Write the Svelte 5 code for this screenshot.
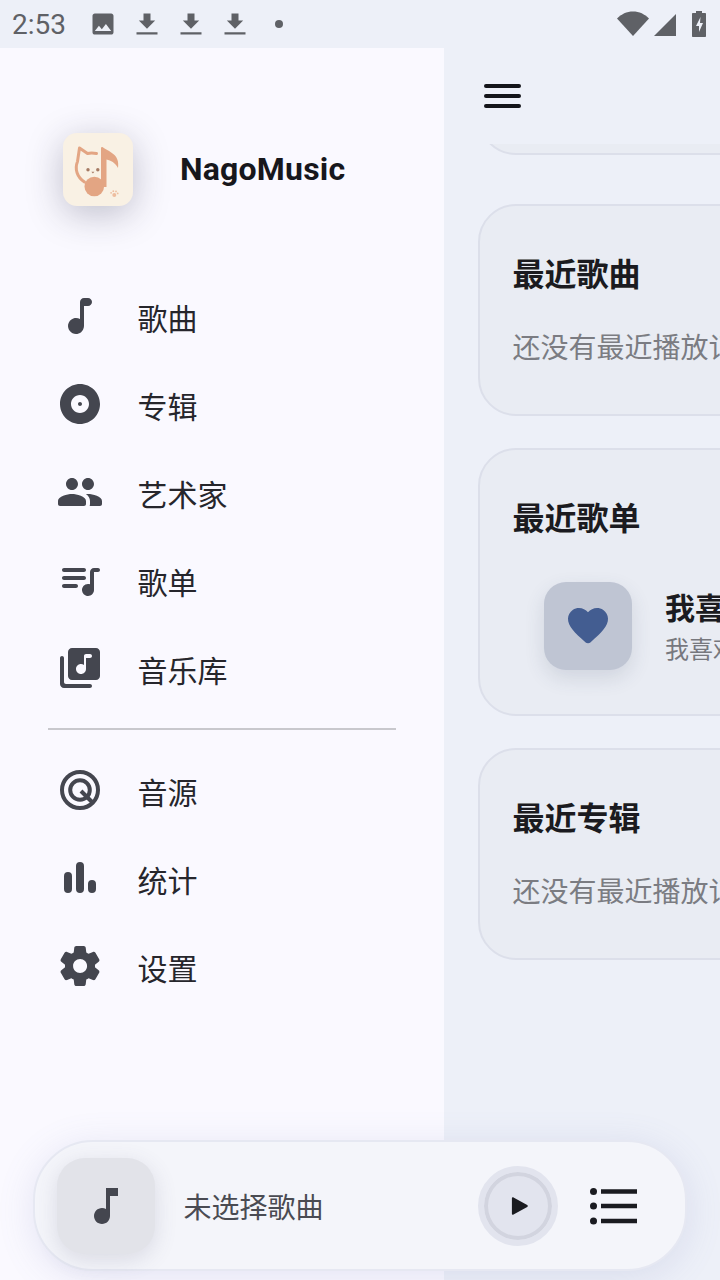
<script lang="ts">
  const paths: Record<string, string> = {
    note: "M12 5v8.55c-.94-.54-2.1-.75-3.33-.32-1.34.47-2.37 1.67-2.61 3.07-.46 2.74 1.86 5.08 4.59 4.65 1.96-.31 3.35-2.11 3.35-4.1V7h2c1.1 0 2-.9 2-2s-.9-2-2-2h-2c-1.1 0-2 .9-2 2z",
    album: "M12 2C6.48 2 2 6.48 2 12s4.48 10 10 10 10-4.48 10-10S17.52 2 12 2zm0 14.5c-2.49 0-4.5-2.01-4.5-4.5S9.51 7.5 12 7.5s4.5 2.01 4.5 4.5-2.01 4.5-4.5 4.5zm0-5.5c-.55 0-1 .45-1 1s.45 1 1 1 1-.45 1-1-.45-1-1-1z",
    people: "M16 11c1.66 0 2.99-1.34 2.99-3S17.66 5 16 5s-3 1.34-3 3 1.34 3 3 3zm-8 0c1.66 0 2.99-1.34 2.99-3S9.66 5 8 5 5 6.34 5 8s1.34 3 3 3zm0 2c-2.33 0-7 1.17-7 3.5V18c0 .55.45 1 1 1h12c.55 0 1-.45 1-1v-1.5c0-2.33-4.67-3.5-7-3.5zm8 0c-.29 0-.62.02-.97.05.02.01.03.03.04.04 1.14.83 1.93 1.94 1.93 3.41V18c0 .35-.07.69-.18 1H22c.55 0 1-.45 1-1v-1.5c0-2.33-4.67-3.5-7-3.5z",
    queue: "M14 6H4c-.55 0-1 .45-1 1s.45 1 1 1h10c.55 0 1-.45 1-1s-.45-1-1-1zm0 4H4c-.55 0-1 .45-1 1s.45 1 1 1h10c.55 0 1-.45 1-1s-.45-1-1-1zM4 16h6c.55 0 1-.45 1-1s-.45-1-1-1H4c-.55 0-1 .45-1 1s.45 1 1 1zM19 6c-1.1 0-2 .9-2 2v6.18c-.31-.11-.65-.18-1-.18-1.84 0-3.28 1.64-2.95 3.54.21 1.21 1.2 2.2 2.41 2.41 1.9.33 3.54-1.11 3.54-2.95V8h2c.55 0 1-.45 1-1s-.45-1-1-1h-3z",
    library: "M20 2H8c-1.1 0-2 .9-2 2v12c0 1.1.9 2 2 2h12c1.1 0 2-.9 2-2V4c0-1.1-.9-2-2-2zm-3 5h-2v5.5c0 1.38-1.12 2.5-2.5 2.5S10 13.88 10 12.5s1.12-2.5 2.5-2.5c.57 0 1.08.19 1.5.51V6c0-.55.45-1 1-1h2c.55 0 1 .45 1 1s-.45 1-1 1zM3 6c-.55 0-1 .45-1 1v13c0 1.1.9 2 2 2h13c.55 0 1-.45 1-1s-.45-1-1-1H5c-.55 0-1-.45-1-1V7c0-.55-.45-1-1-1z",
    bars: "M4 11a2 2 0 0 1 4 0v6.500a2 2 0 0 1-4 0zM10 6a2 2 0 0 1 4 0v11.500a2 2 0 0 1-4 0zM16 15a2 2 0 0 1 4 0v2.500a2 2 0 0 1-4 0z",
    settings: "M19.5 12c0-.23-.01-.45-.03-.68l1.86-1.41c.4-.3.51-.86.26-1.3l-1.87-3.23c-.25-.44-.79-.62-1.25-.42l-2.15.91c-.37-.26-.76-.49-1.17-.68l-.29-2.31c-.06-.5-.49-.88-.99-.88h-3.73c-.51 0-.94.38-1 .88l-.29 2.31c-.41.19-.8.42-1.17.68l-2.15-.91c-.46-.2-1-.02-1.25.42L2.41 8.62c-.25.44-.14.99.26 1.3l1.86 1.41c-.02.22-.03.44-.03.67s.01.45.03.68l-1.86 1.41c-.4.3-.51.86-.26 1.3l1.87 3.23c.25.44.79.62 1.25.42l2.15-.91c.37.26.76.49 1.17.68l.29 2.31c.06.5.49.88.99.88h3.73c.5 0 .93-.38.99-.88l.29-2.31c.41-.19.8-.42 1.17-.68l2.15.91c.46.2 1 .02 1.25-.42l1.87-3.23c.25-.44.14-.99-.26-1.3l-1.86-1.41c.03-.23.04-.45.04-.68zm-7.46 3.5c-1.93 0-3.5-1.57-3.5-3.5s1.57-3.5 3.5-3.5 3.5 1.57 3.5 3.5-1.57 3.5-3.5 3.5z"
  };

  const groupA = [
    { icon: "note", label: "歌曲" },
    { icon: "album", label: "专辑" },
    { icon: "people", label: "艺术家" },
    { icon: "queue", label: "歌单" },
    { icon: "library", label: "音乐库" }
  ];
  const groupB = [
    { icon: "source", label: "音源" },
    { icon: "bars", label: "统计" },
    { icon: "settings", label: "设置" }
  ];
</script>

<div class="screen">
  <header class="status">
    <span class="clock">2:53</span>
    <svg class="st-img" viewBox="0 0 24 24"><path d="M21 19V5c0-1.1-.9-2-2-2H5c-1.1 0-2 .9-2 2v14c0 1.1.9 2 2 2h14c1.1 0 2-.9 2-2zM8.5 13.5l2.5 3.01L14.5 12l4.5 6H5l3.5-4.5z"/></svg>
    {#each [0, 1, 2] as _}
      <svg class="st-dl" viewBox="0 0 24 24"><path d="M19 9h-4V3H9v6H5l7 7 7-7zM3 19h18v2H3v-2z"/></svg>
    {/each}
    <span class="st-dot"></span>
    <span class="st-space"></span>
    <svg class="st-wifi" viewBox="0 0 32 25"><path d="M0 7.5C4.2 3 9.8.4 16 .4S27.800 3 32 7.500L16 25z"/></svg>
    <svg class="st-signal" viewBox="0 0 22 22"><path d="M22 0v22H0z"/></svg>
    <svg class="st-batt" viewBox="0 0 14 26"><path fill-rule="evenodd" d="M4 0h6v2h3c.6 0 1 .4 1 1v22c0 .6-.4 1-1 1H1c-.6 0-1-.4-1-1V3c0-.6.4-1 1-1h3zM8.500 6 4 15h3v6l4-9H8z"/></svg>
  </header>

  <div class="body">
    <aside class="drawer">
      <div class="brand">
        <div class="logo">
          <svg viewBox="0 0 70 73">
            <path d="M21.500 49C14 44 11.500 36 14.500 28.500L16.500 15 24.500 20.500C27 19.800 30 19.800 33.500 20.500" fill="none" stroke="#e3a583" stroke-width="3" stroke-linecap="round" stroke-linejoin="round"/>
            <circle cx="31.300" cy="53.500" r="9.800" fill="#e3a583"/>
            <path d="M38 54V15c0-1 1-1.300 1.800-.7C45 18.500 57.500 21 55 35 52 29.500 48 27.500 43.500 26.500V54z" fill="#e3a583"/>
            <circle cx="25" cy="36.800" r="1.700" fill="#a57a63"/>
            <circle cx="34.800" cy="36.800" r="1.700" fill="#a57a63"/>
            <path d="M28.400 38.800h3l-1.500 1.700z" fill="#a57a63"/>
            <circle cx="51.300" cy="62" r="2" fill="#eebd9f"/>
            <circle cx="48.100" cy="59.800" r=".9" fill="#eebd9f"/>
            <circle cx="50.300" cy="58.200" r=".9" fill="#eebd9f"/>
            <circle cx="53" cy="58.400" r=".9" fill="#eebd9f"/>
            <circle cx="54.700" cy="60.400" r=".9" fill="#eebd9f"/>
          </svg>
        </div>
        <span class="brand-name">NagoMusic</span>
      </div>

      <nav class="group">
        {#each groupA as item}
          <div class="item">
            <svg class="icon" viewBox="0 0 24 24"><path d={paths[item.icon]}/></svg>
            <span>{item.label}</span>
          </div>
        {/each}
      </nav>
      <div class="rule"></div>
      <nav class="group">
        {#each groupB as item}
          <div class="item">
            {#if item.icon === "source"}
              <svg class="icon ring" viewBox="0 0 24 24">
                <circle cx="12" cy="12" r="9"/>
                <circle cx="12" cy="12" r="4.900"/>
                <path d="M12.500 12.500 18 18"/>
              </svg>
            {:else}
              <svg class="icon" viewBox="0 0 24 24"><path d={paths[item.icon]}/></svg>
            {/if}
            <span>{item.label}</span>
          </div>
        {/each}
      </nav>
    </aside>

    <main class="main">
      <div class="topbar">
        <button class="burger" aria-label="menu"><i></i><i></i><i></i></button>
      </div>
      <div class="scroll">
        <section class="card stub"></section>

        <section class="card first">
          <h2>最近歌曲</h2>
          <p class="empty">还没有最近播放记录</p>
        </section>

        <section class="card">
          <h2>最近歌单</h2>
          <div class="playlist">
            <div class="cover">
              <svg viewBox="0 0 24 24"><path d="M13.350 20.130c-.76.69-1.930.69-2.690-.01l-.11-.1C5.300 15.270 1.870 12.160 2 8.280c.06-1.700.93-3.330 2.340-4.290 2.640-1.800 5.900-.96 7.660 1.100 1.760-2.060 5.020-2.910 7.660-1.100 1.410.96 2.280 2.590 2.340 4.290.14 3.880-3.300 6.990-8.550 11.760l-.1.090z"/></svg>
            </div>
            <div class="pl-text">
              <strong>我喜欢的音乐</strong>
              <small>我喜欢的音乐</small>
            </div>
          </div>
        </section>

        <section class="card">
          <h2>最近专辑</h2>
          <p class="empty">还没有最近播放记录</p>
        </section>
      </div>
    </main>
  </div>

  <div class="player">
    <div class="art">
      <svg viewBox="0 0 24 24"><path d="M12 3v10.550c-.59-.34-1.270-.55-2-.55-2.210 0-4 1.790-4 4s1.790 4 4 4 4-1.790 4-4V7h4V3h-6z"/></svg>
    </div>
    <span class="track">未选择歌曲</span>
    <button class="play" aria-label="play">
      <svg viewBox="0 0 20 22"><path d="M1 2.500c0-1 1-1.500 1.800-1L18 10c.9.500.9 1.500 0 2L2.800 20.500c-.8.500-1.800 0-1.800-1z"/></svg>
    </button>
    <button class="queue" aria-label="queue">
      <svg viewBox="0 0 47 36"><circle cx="3.500" cy="3.500" r="3.500"/><circle cx="3.500" cy="18" r="3.500"/><circle cx="3.500" cy="33" r="3.500"/><path d="M11 1.200h36v4.600H11zM11 15.700h36v4.600H11zM11 30.700h36v4.600H11z"/></svg>
    </button>
  </div>
</div>

<style>
  :global(body) {
    margin: 0;
    background: #edf0f8;
  }

  .screen {
    position: relative;
    width: 720px;
    height: 1280px;
    overflow: hidden;
    background: #edf0f8;
    font-family: Roboto, "Noto Sans CJK SC", sans-serif;
    color: #1b1b20;
  }

  .status {
    display: flex;
    align-items: center;
    height: 48px;
    padding: 0 14px 0 12px;
    box-sizing: border-box;
    fill: #5f6166;
    color: #5f6166;
  }
  .clock {
    font-size: 28px;
    width: 76px;
  }
  .st-img {
    width: 28px;
    height: 28px;
    margin-left: 1px;
  }
  .st-dl {
    width: 28px;
    height: 28px;
    margin-left: 16px;
  }
  .st-dot {
    width: 8px;
    height: 8px;
    border-radius: 50%;
    background: #5f6166;
    margin-left: 26px;
  }
  .st-space {
    flex: 1;
  }
  .st-wifi {
    width: 32px;
    height: 25px;
    margin-top: -1px;
  }
  .st-signal {
    width: 22px;
    height: 22px;
    margin-left: 5px;
    margin-top: 2px;
  }
  .st-batt {
    width: 14px;
    height: 26px;
    margin-left: 16px;
  }

  .body {
    display: flex;
    height: 1232px;
  }

  .drawer {
    flex: 0 0 444px;
    background: #faf9ff;
    display: flex;
    flex-direction: column;
  }
  .brand {
    display: flex;
    align-items: center;
    gap: 47px;
    height: 224px;
    padding: 19px 0 0 63px;
    box-sizing: border-box;
  }
  .logo {
    width: 70px;
    height: 73px;
    background: #f9f1e4;
    border-radius: 14px;
    box-shadow: 0 8px 36px rgba(40, 40, 70, 0.28);
  }
  .logo svg {
    display: block;
    width: 100%;
    height: 100%;
  }
  .brand-name {
    font-size: 32px;
    font-weight: 700;
    letter-spacing: 0.2px;
    color: #17171c;
    margin-top: -2px;
  }

  .group {
    display: flex;
    flex-direction: column;
  }
  .item {
    display: flex;
    align-items: center;
    gap: 33.5px;
    height: 88px;
    padding-left: 56px;
    font-size: 30px;
    color: #26262c;
  }
  .item span {
    margin-top: 2px;
  }
  .icon {
    width: 48px;
    height: 48px;
    fill: #44464f;
  }
  .ring {
    fill: none;
    stroke: #44464f;
    stroke-width: 2;
  }
  .rule {
    height: 2px;
    margin: 16px 48px;
    background: #c8c8cd;
  }

  .main {
    flex: 1;
    min-width: 0;
    display: flex;
    flex-direction: column;
    overflow: hidden;
  }
  .topbar {
    height: 96px;
    flex: none;
    display: flex;
    align-items: center;
    padding-left: 40px;
  }
  .burger {
    display: flex;
    flex-direction: column;
    gap: 6px;
    width: 37px;
    padding: 0;
    border: 0;
    background: none;
  }
  .burger i {
    display: block;
    height: 4px;
    border-radius: 2px;
    background: #14151a;
  }
  .scroll {
    flex: 1;
    overflow: hidden;
    padding-left: 34px;
    display: flex;
    flex-direction: column;
    gap: 32px;
  }
  .card {
    flex: none;
    width: 640px;
    box-sizing: border-box;
    padding: 49px 32.5px 45px;
    background: #e9ecf3;
    border: 2px solid #dcdfea;
    border-radius: 38px;
  }
  .stub {
    height: 100px;
    margin-top: -89px;
  }
  .first {
    margin-top: 17px;
  }
  h2 {
    margin: 0;
    font-size: 32px;
    line-height: 40px;
    font-weight: 700;
    color: #1b1b20;
  }
  .empty {
    margin: 34px 0 0;
    font-size: 28px;
    line-height: 40px;
    color: #7b7c82;
    white-space: nowrap;
  }
  .playlist {
    display: flex;
    align-items: center;
    gap: 33px;
    margin: 43px 0 -1px 31.5px;
  }
  .cover {
    width: 88px;
    height: 88px;
    flex: none;
    border-radius: 22px;
    background: #bfc5d3;
    box-shadow: 0 8px 20px rgba(60, 70, 100, 0.14);
    display: flex;
    align-items: center;
    justify-content: center;
  }
  .cover svg {
    width: 48px;
    height: 48px;
    fill: #435d91;
  }
  .pl-text {
    display: flex;
    flex-direction: column;
    gap: 3px;
    margin-top: 3px;
  }
  .pl-text strong {
    font-size: 30px;
    line-height: 42px;
    color: #1b1b20;
    white-space: nowrap;
  }
  .pl-text small {
    font-size: 24px;
    line-height: 34px;
    color: #77787e;
    white-space: nowrap;
  }

  .player {
    position: absolute;
    left: 33px;
    top: 1140px;
    width: 654px;
    height: 131px;
    box-sizing: border-box;
    padding: 0 48px 0 22px;
    display: flex;
    align-items: center;
    background: #f4f5fa;
    border: 2px solid #e6e8f2;
    border-radius: 60px;
    box-shadow: 0 6px 36px rgba(110, 120, 180, 0.16);
  }
  .art {
    width: 98px;
    height: 96px;
    flex: none;
    border-radius: 28px;
    background: #e2e3e9;
    box-shadow: 0 6px 22px rgba(80, 80, 110, 0.16);
    display: flex;
    align-items: center;
    justify-content: center;
  }
  .art svg {
    width: 48px;
    height: 48px;
    fill: #44464f;
  }
  .track {
    flex: 1;
    margin-left: 28.5px;
    font-size: 28px;
    color: #4a4b52;
  }
  .play {
    width: 80px;
    height: 80px;
    flex: none;
    padding: 0;
    box-sizing: border-box;
    border-radius: 50%;
    border: 6px solid #e2e4ee;
    background: #e2e4ee;
    box-shadow: inset 0 0 0 4px #d2d4df;
    display: flex;
    align-items: center;
    justify-content: center;
  }
  .play svg {
    width: 18px;
    height: 20px;
    margin-left: 3px;
    fill: #1a1b20;
  }
  .queue {
    width: 47px;
    height: 36px;
    flex: none;
    margin-left: 32px;
    padding: 0;
    border: 0;
    background: none;
  }
  .queue svg {
    display: block;
    width: 47px;
    height: 36px;
    fill: #1a1b20;
    overflow: visible;
  }
</style>
